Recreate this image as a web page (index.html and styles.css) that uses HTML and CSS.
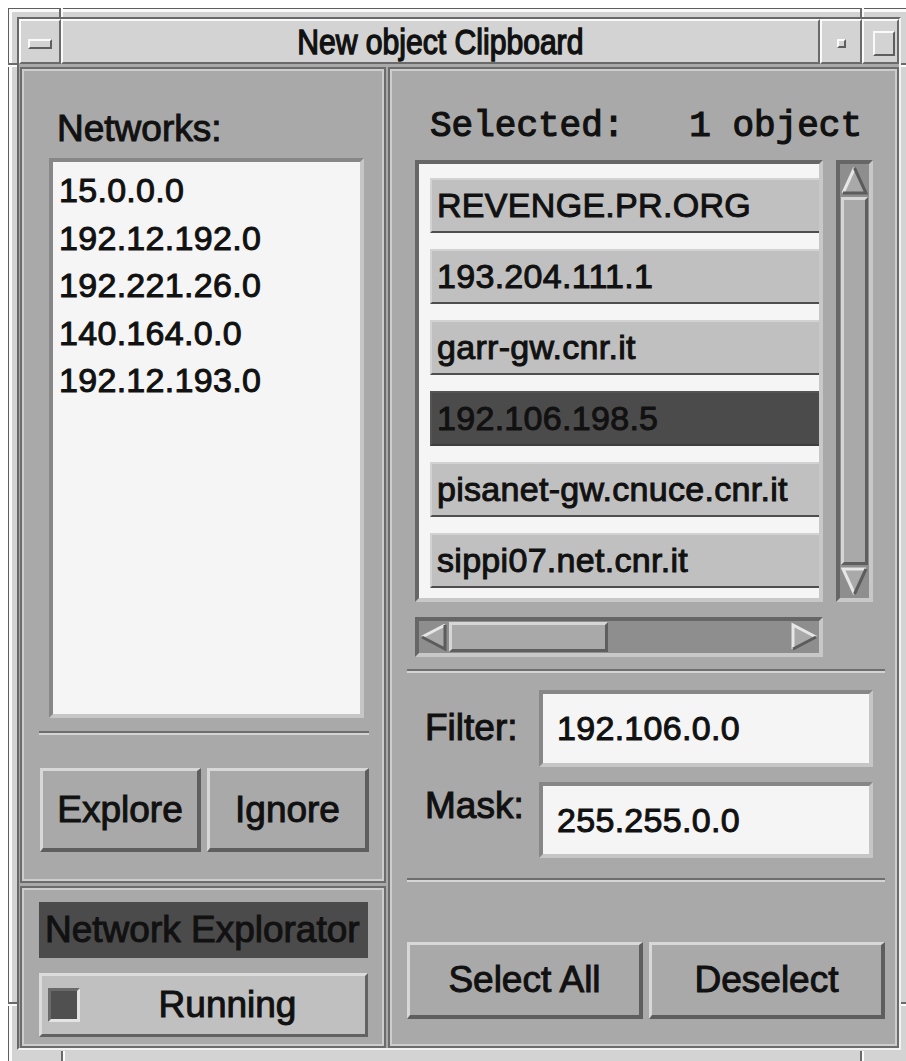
FILE: index.html
```html
<!DOCTYPE html>
<html lang="en">
<head>
<meta charset="utf-8">
<title>New object Clipboard</title>
<link rel="stylesheet" href="styles.css">
</head>
<body>
<div class="window">
  <!-- resize-handle grooves cut into the window frame -->
  <span class="grip grip-v grip-top-left"></span>
  <span class="grip grip-v grip-top-right"></span>
  <span class="grip grip-h grip-left-top"></span>
  <span class="grip grip-h grip-left-bottom"></span>
  <span class="grip grip-h grip-right-top"></span>
  <span class="grip grip-h grip-right-bottom"></span>
  <span class="grip grip-v grip-bottom-left"></span>
  <span class="grip grip-v grip-bottom-right"></span>

  <div class="client">
    <div class="titlebar">
      <div class="tb-btn tb-menu"><span class="menu-bar"></span></div>
      <div class="tb-title"><span class="tb-text">New object Clipboard</span></div>
      <div class="tb-btn tb-min"><span class="min-box"></span></div>
      <div class="tb-btn tb-max"><span class="max-box"></span></div>
    </div>

    <div class="content">
      <div class="left-col">
        <section class="panel panel-networks">
          <div class="label label-networks">Networks:</div>
          <div class="netlist">
            <div>15.0.0.0</div>
            <div>192.12.192.0</div>
            <div>192.221.26.0</div>
            <div>140.164.0.0</div>
            <div>192.12.193.0</div>
          </div>
          <div class="sep sep-left"></div>
          <div class="btn-row btn-row-left">
            <div class="btn btn-explore">Explore</div>
            <div class="btn btn-ignore">Ignore</div>
          </div>
        </section>

        <section class="panel panel-status">
          <div class="status-title">Network Explorator</div>
          <div class="toggle">
            <span class="indicator"></span>
            <span class="toggle-label">Running</span>
          </div>
        </section>
      </div>

      <section class="panel panel-objects">
        <div class="selected-count">Selected:   1 object</div>

        <div class="list-row">
          <div class="objlist">
            <div class="obj">REVENGE.PR.ORG</div>
            <div class="obj">193.204.111.1</div>
            <div class="obj">garr-gw.cnr.it</div>
            <div class="obj obj-selected">192.106.198.5</div>
            <div class="obj">pisanet-gw.cnuce.cnr.it</div>
            <div class="obj">sippi07.net.cnr.it</div>
          </div>

          <div class="vscroll">
            <svg class="arrow" width="27" height="30" viewBox="0 0 27 30">
              <polygon points="13.5,3 2,28 25,28" fill="#a9a9a9"/>
              <polyline points="2,28 13.5,3" fill="none" stroke="#e6e6e6" stroke-width="3"/>
              <polyline points="13.5,3 25,28 2,28" fill="none" stroke="#5c5c5c" stroke-width="3"/>
            </svg>
            <div class="vslider"></div>
            <svg class="arrow" width="27" height="30" viewBox="0 0 27 30">
              <polygon points="2,2 25,2 13.5,27" fill="#a9a9a9"/>
              <polyline points="25,2 2,2 13.5,27" fill="none" stroke="#e6e6e6" stroke-width="3"/>
              <polyline points="25,2 13.5,27" fill="none" stroke="#5c5c5c" stroke-width="3"/>
            </svg>
          </div>
        </div>

        <div class="hscroll">
          <svg class="arrow" width="27" height="30" viewBox="0 0 27 30">
            <polygon points="2,15 25,3 25,27" fill="#a9a9a9"/>
            <polyline points="2,15 25,3" fill="none" stroke="#e6e6e6" stroke-width="3"/>
            <polyline points="25,3 25,27 2,15" fill="none" stroke="#5c5c5c" stroke-width="3"/>
          </svg>
          <div class="hslider"></div>
          <svg class="arrow arrow-end" width="27" height="30" viewBox="0 0 27 30">
            <polygon points="2,3 25,15 2,27" fill="#a9a9a9"/>
            <polyline points="2,27 2,3 25,15" fill="none" stroke="#e6e6e6" stroke-width="3"/>
            <polyline points="25,15 2,27" fill="none" stroke="#5c5c5c" stroke-width="3"/>
          </svg>
        </div>

        <div class="sep sep-right sep-upper"></div>

        <div class="field-row field-row-filter">
          <div class="label field-label">Filter:</div>
          <div class="field">192.106.0.0</div>
        </div>
        <div class="field-row field-row-mask">
          <div class="label field-label">Mask:</div>
          <div class="field">255.255.0.0</div>
        </div>

        <div class="sep sep-right sep-lower"></div>

        <div class="btn-row btn-row-right">
          <div class="btn">Select All</div>
          <div class="btn">Deselect</div>
        </div>
      </section>
    </div>
  </div>
</div>
</body>
</html>
```

FILE: styles.css
```css
html, body {
  margin: 0;
  overflow: hidden;
  background: #ffffff;
}

body {
  font-family: "Liberation Sans", Arial, sans-serif;
  color: #111111;
  -webkit-text-stroke: 1px #111111;
}

/* ---- window frame ---- */
.window {
  position: relative;
  box-sizing: border-box;
  width: 902px;
  margin: 8px 0 0 8px;
  padding: 8px 8px 14px 8px;
  border: 1px solid #5e5e5e;
  background: #d3d3d3;
  box-shadow: inset 3px 3px 0 #fbfbfb, inset -2px -2px 0 #8c8c8c;
}

.grip {
  position: absolute;
  background: #6a6a6a;
}
.grip-v { width: 2px; box-shadow: 2px 0 0 #fbfbfb; }
.grip-h { height: 2px; box-shadow: 0 2px 0 #fbfbfb; }

.grip-top-left     { top: -1px; left: 50px;  height: 9px; }
.grip-top-right    { top: -1px; left: 851px; height: 9px; }
.grip-left-top     { left: -1px; top: 54px;  width: 9px; }
.grip-left-bottom  { left: -1px; top: 993px; width: 9px; }
.grip-right-top    { right: -1px; top: 54px;  width: 9px; }
.grip-right-bottom { right: -1px; top: 993px; width: 9px; }
.grip-bottom-left  { top: 1042px; left: 52px;  height: 16px; }
.grip-bottom-right { top: 1042px; left: 851px; height: 16px; }

.client {
  border: 2px solid;
  border-color: #686868 #f2f2f2 #f2f2f2 #686868;
}

/* ---- title bar ---- */
.titlebar {
  display: flex;
  height: 45px;
  background: #d3d3d3;
}

.tb-btn,
.tb-title {
  box-sizing: border-box;
  border: 2px solid;
  border-color: #fafafa #6a6a6a #6a6a6a #fafafa;
}

.tb-btn {
  display: flex;
  align-items: center;
  justify-content: center;
}

.tb-menu { width: 42px; }
.tb-min  { width: 42px; }
.tb-max  { width: 37px; }

.tb-title {
  flex: 1;
  text-align: center;
  line-height: 41px;
  white-space: nowrap;
}

/* narrow, heavy window-manager title face */
.tb-text {
  display: inline-block;
  font-size: 35px;
  transform: scaleX(0.86);
  -webkit-text-stroke: 1.4px #111111;
}

.menu-bar,
.min-box,
.max-box {
  box-sizing: border-box;
  border: 2px solid;
  border-color: #fafafa #5e5e5e #5e5e5e #fafafa;
  background: #d3d3d3;
}

.menu-bar { width: 24px; height: 10px; margin-top: 5px; }
.min-box  { width: 9px;  height: 9px;  margin-top: 4px; }
.max-box  { width: 22px; height: 25px; margin: 4px 0 0 7px; }

/* ---- client area ---- */
.content {
  display: flex;
  gap: 2px;
  box-sizing: border-box;
  height: 984px;
  padding: 3px 0 0 1px;
  background: #a9a9a9;
}

.left-col {
  display: flex;
  flex-direction: column;
  gap: 3px;
  width: 366px;
}

.panel {
  box-sizing: border-box;
  border: 2px solid #6c6c6c;
  box-shadow: inset 0 0 0 2px #cdcdcd;
  background: #a9a9a9;
}

.panel-networks { flex: 1; }
.panel-status   { height: 162px; }
.panel-objects  { flex: 1; }

.label {
  font-size: 37px;
  line-height: 42px;
  white-space: nowrap;
}

.label-networks {
  margin: 39px 0 0 35px;
}

/* sunken white list boxes and text fields */
.netlist,
.field {
  box-sizing: border-box;
  border: 4px solid;
  border-color: #878787 #c6c6c6 #c6c6c6 #878787;
  background: #f5f5f5;
  font-size: 34px;
  letter-spacing: 0.3px;
  white-space: nowrap;
}

.netlist {
  width: 315px;
  height: 560px;
  margin: 8px 0 0 27px;
  padding: 5px 0 0 6px;
  line-height: 47.5px;
  overflow: hidden;
}

/* etched separators */
.sep {
  height: 0;
  border-top: 2px solid #6e6e6e;
  border-bottom: 2px solid #d4d4d4;
}

.sep-left  { width: 330px; margin: 13px 0 0 17px; }
.sep-right { width: 478px; margin-left: 17px; }
.sep-upper { margin-top: 12px; }
.sep-lower { margin-top: 20px; }

/* push buttons */
.btn-row {
  display: flex;
  gap: 6px;
}

.btn {
  box-sizing: border-box;
  border-style: solid;
  border-width: 3px 4px 4px 3px;
  border-color: #d8d8d8 #5e5e5e #5e5e5e #d8d8d8;
  background: #a9a9a9;
  text-align: center;
  font-size: 37px;
  white-space: nowrap;
}

.btn-row-left { margin: 33px 0 0 18px; }
.btn-row-left .btn { height: 84px; line-height: 77px; }
.btn-explore { width: 161px; }
.btn-ignore  { width: 162px; }

.btn-row-right { margin: 60px 0 0 17px; }
.btn-row-right .btn { width: 236px; height: 77px; line-height: 70px; }

/* status panel */
.status-title {
  box-sizing: border-box;
  width: 329px;
  height: 56px;
  margin: 14px 0 0 17px;
  padding-left: 6px;
  background: #4b4b4b;
  font-size: 37px;
  line-height: 56px;
  white-space: nowrap;
  overflow: hidden;
}

.toggle {
  display: flex;
  align-items: center;
  box-sizing: border-box;
  width: 329px;
  height: 64px;
  margin: 15px 0 0 17px;
  border: 3px solid;
  border-color: #dcdcdc #626262 #626262 #dcdcdc;
  background: #c0c0c0;
}

.indicator {
  box-sizing: border-box;
  width: 32px;
  height: 34px;
  margin-left: 6px;
  border: 3px solid;
  border-color: #6a6a6a #e4e4e4 #e4e4e4 #6a6a6a;
  background: #505050;
}

.toggle-label {
  flex: 1;
  padding-left: 10px;
  text-align: center;
  font-size: 37px;
  line-height: 58px;
}

/* object panel */
.selected-count {
  margin: 38px 0 0 40px;
  font-family: "Liberation Mono", "Courier New", monospace;
  font-size: 36px;
  line-height: 40px;
  white-space: pre;
  -webkit-text-stroke: 1.2px #111111;
}

.list-row {
  display: flex;
  gap: 13px;
  margin: 13px 0 0 25px;
}

.objlist {
  box-sizing: border-box;
  width: 408px;
  height: 442px;
  padding: 14px 0 0 11px;
  border: 4px solid;
  border-color: #666666 #c8c8c8 #c8c8c8 #666666;
  background: #f5f5f5;
  overflow: hidden;
}

.obj {
  box-sizing: border-box;
  width: 470px;
  height: 55px;
  margin-bottom: 16px;
  padding-left: 5px;
  border-style: solid;
  border-width: 2px 0 2px 2px;
  border-color: #d2d2d2 transparent #4e4e4e #d2d2d2;
  background: #c0c0c0;
  font-size: 34px;
  letter-spacing: 0.3px;
  line-height: 51px;
  white-space: nowrap;
}

.obj-selected {
  border-color: #555555 transparent #3e3e3e #555555;
  background: #4b4b4b;
}

/* scrollbars */
.vscroll,
.hscroll {
  box-sizing: border-box;
  border: 4px solid;
  border-color: #666666 #c8c8c8 #c8c8c8 #666666;
  background: #8e8e8e;
  display: flex;
}

.vscroll {
  flex-direction: column;
  align-items: center;
  gap: 2px;
  width: 37px;
  height: 442px;
  padding: 1px 0;
}

.hscroll {
  align-items: center;
  width: 408px;
  height: 40px;
  margin: 15px 0 0 25px;
  padding: 0 1px;
}

.arrow {
  display: block;
  flex: none;
}

.arrow-end { margin-left: auto; }

.vslider,
.hslider {
  box-sizing: border-box;
  border: 3px solid;
  border-color: #d6d6d6 #5e5e5e #5e5e5e #d6d6d6;
  background: #a9a9a9;
}

.vslider {
  flex: 1;
  width: 27px;
}

.hslider {
  width: 159px;
  height: 30px;
  margin-left: 2px;
}

/* filter / mask fields */
.field-row {
  display: flex;
  margin-left: 35px;
}

.field-label {
  width: 114px;
}

.field {
  width: 334px;
  height: 77px;
  padding-left: 14px;
  line-height: 69px;
}

.field-row-filter { margin-top: 17px; }
.field-row-filter .field-label { padding-top: 17px; }

.field-row-mask { margin-top: 15px; }
.field-row-mask .field { height: 76px; line-height: 68px; }
.field-row-mask .field-label { padding-top: 3px; }
```
